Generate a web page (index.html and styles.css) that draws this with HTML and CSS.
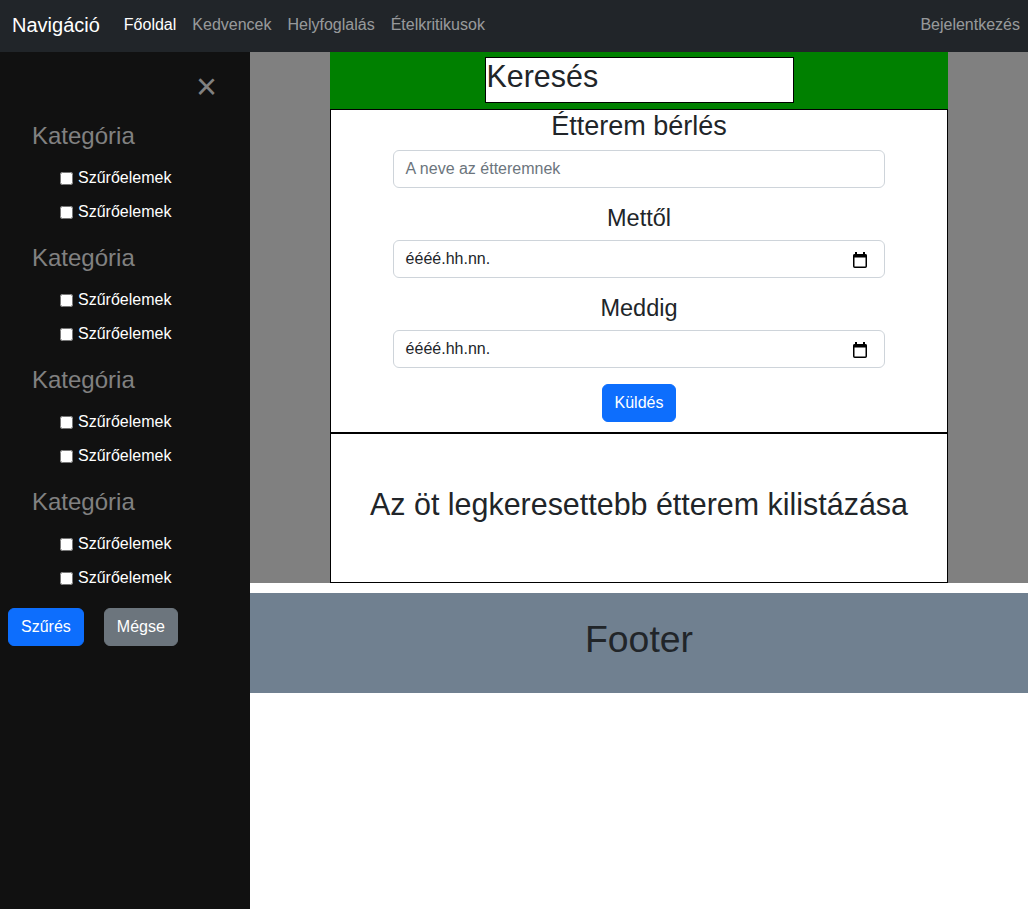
FILE: index.html
```html
<!DOCTYPE html>
<html lang="hu">
<head>
<meta charset="utf-8">
<title>Navigáció</title>
<link rel="stylesheet" href="styles.css">
</head>
<body>
<nav class="navbar">
  <a class="brand" href="#">Navigáció</a>
  <ul class="nav-links">
    <li><a class="nav-link active" href="#">Főoldal</a></li>
    <li><a class="nav-link" href="#">Kedvencek</a></li>
    <li><a class="nav-link" href="#">Helyfoglalás</a></li>
    <li><a class="nav-link" href="#">Ételkritikusok</a></li>
  </ul>
  <a class="nav-link login" href="#">Bejelentkezés</a>
</nav>
<div class="layout">
  <aside class="sidenav">
    <a class="closebtn" href="#">&times;</a>
    <div class="category">
      <h4 class="cat-title">Kategória</h4>
      <label class="check-row"><input type="checkbox"> Szűrőelemek</label>
      <label class="check-row"><input type="checkbox"> Szűrőelemek</label>
    </div>
    <div class="category">
      <h4 class="cat-title">Kategória</h4>
      <label class="check-row"><input type="checkbox"> Szűrőelemek</label>
      <label class="check-row"><input type="checkbox"> Szűrőelemek</label>
    </div>
    <div class="category">
      <h4 class="cat-title">Kategória</h4>
      <label class="check-row"><input type="checkbox"> Szűrőelemek</label>
      <label class="check-row"><input type="checkbox"> Szűrőelemek</label>
    </div>
    <div class="category">
      <h4 class="cat-title">Kategória</h4>
      <label class="check-row"><input type="checkbox"> Szűrőelemek</label>
      <label class="check-row"><input type="checkbox"> Szűrőelemek</label>
    </div>
    <div class="side-buttons">
      <button class="btn btn-primary">Szűrés</button>
      <button class="btn btn-secondary">Mégse</button>
    </div>
  </aside>
  <main class="main">
    <div class="stage">
      <div class="column">
        <div class="search-bar">
          <div class="search-box">Keresés</div>
        </div>
        <form class="rent-form">
          <h3 class="form-title">Étterem bérlés</h3>
          <div class="form-control placeholder">A neve az étteremnek</div>
          <h4 class="field-label">Mettől</h4>
          <div class="form-control date-field">
            <span>éééé.hh.nn.</span>
            <svg class="cal-icon" width="14" height="16" viewBox="0 0 14 16" aria-hidden="true">
              <rect x="2" y="0" width="2" height="3" fill="#000"/>
              <rect x="10" y="0" width="2" height="3" fill="#000"/>
              <rect x="0.75" y="2.75" width="12.5" height="12.5" rx="1" fill="none" stroke="#000" stroke-width="1.5"/>
              <rect x="0.5" y="2.5" width="13" height="3" fill="#000"/>
            </svg>
          </div>
          <h4 class="field-label">Meddig</h4>
          <div class="form-control date-field">
            <span>éééé.hh.nn.</span>
            <svg class="cal-icon" width="14" height="16" viewBox="0 0 14 16" aria-hidden="true">
              <rect x="2" y="0" width="2" height="3" fill="#000"/>
              <rect x="10" y="0" width="2" height="3" fill="#000"/>
              <rect x="0.75" y="2.75" width="12.5" height="12.5" rx="1" fill="none" stroke="#000" stroke-width="1.5"/>
              <rect x="0.5" y="2.5" width="13" height="3" fill="#000"/>
            </svg>
          </div>
          <button type="button" class="btn btn-primary send">Küldés</button>
        </form>
        <section class="top-list">
          <h2 class="top-title">Az öt legkeresettebb étterem kilistázása</h2>
        </section>
      </div>
    </div>
    <footer class="footer">
      <h1 class="footer-title">Footer</h1>
    </footer>
  </main>
</div>
</body>
</html>
```

FILE: styles.css
```css
* { box-sizing: border-box; }

html, body {
  margin: 0;
  padding: 0;
}

body {
  font-family: "Liberation Sans", Arial, sans-serif;
  font-size: 16px;
  line-height: 1.5;
  color: #212529;
  background: #fff;
}

a { text-decoration: none; }

/* Navbar */
.navbar {
  display: flex;
  align-items: center;
  height: 52px;
  padding: 0 8px 0 12px;
  background: #212529;
}

.brand {
  font-size: 20px;
  line-height: 30px;
  color: #fff;
  margin-right: 16px;
  padding-bottom: 2px;
}

.nav-links {
  display: flex;
  list-style: none;
  margin: 0;
  padding: 0;
  flex: 1;
}

.nav-link {
  display: block;
  padding: 8px;
  font-size: 16px;
  line-height: 24px;
  color: rgba(255, 255, 255, 0.55);
  padding-bottom: 10px;
}

.nav-link.active { color: #fff; }

.login { padding-right: 0; }

/* Layout */
.layout {
  display: grid;
  grid-template-columns: 250px 1fr;
  min-height: calc(100vh - 52px);
}

.sidenav {
  position: relative;
  background: #111;
  padding-top: 66px;
}

.closebtn {
  position: absolute;
  top: 0;
  right: 25px;
  padding: 8px 8px 8px 32px;
  font-size: 36px;
  line-height: 54px;
  color: #818181;
}

.category {
  margin-bottom: 11px;
}

.cat-title {
  margin: 0 0 7px;
  padding-left: 32px;
  font-size: 24px;
  line-height: 36px;
  font-weight: 400;
  color: #818181;
}

.check-row {
  display: flex;
  align-items: center;
  height: 34px;
  padding-left: 56px;
  color: #fff;
  font-size: 16px;
}

.check-row input {
  width: 13px;
  height: 13px;
  margin: 0 5px 0 4px;
}

.side-buttons {
  display: flex;
  gap: 20px;
  padding-left: 8px;
  margin-top: 13px;
}

/* Buttons */
.btn {
  display: inline-block;
  font-family: inherit;
  font-size: 16px;
  line-height: 24px;
  padding: 6px 12px;
  border: 1px solid transparent;
  border-radius: 6px;
  color: #fff;
  cursor: pointer;
}

.btn-primary {
  background: #0d6efd;
  border-color: #0d6efd;
}

.btn-secondary {
  background: #6c757d;
  border-color: #6c757d;
}

/* Main */
.main {
  display: flex;
  flex-direction: column;
}

.stage {
  background: #808080;
}

.column {
  width: 618px;
  margin: 0 auto;
}

.search-bar {
  background: #008000;
  padding: 5px 0 6px;
  display: flex;
  justify-content: center;
}

.search-box {
  width: 50%;
  height: 46px;
  background: #fff;
  border: 1px solid #000;
  font-size: 30.45px;
  line-height: 36px;
  padding-left: 1px;
  color: #212529;
}

.rent-form {
  background: #fff;
  border: 1px solid #000;
  display: flex;
  flex-direction: column;
  align-items: center;
  padding-bottom: 10px;
}

.form-title {
  margin: 0 0 8px;
  font-size: 27px;
  line-height: 32.4px;
  font-weight: 400;
}

.field-label {
  margin: 0 0 8px;
  font-size: 23.5px;
  line-height: 28px;
  font-weight: 400;
}

.form-control {
  width: 80%;
  height: 38px;
  border: 1px solid #ced4da;
  border-radius: 6px;
  padding: 6px 12px;
  font-size: 16px;
  line-height: 24px;
  color: #212529;
  background: #fff;
  margin-bottom: 16px;
}

.placeholder { color: #6c757d; }

.date-field {
  display: flex;
  align-items: center;
  justify-content: space-between;
  padding-right: 17px;
}

.cal-icon {
  display: block;
  margin-top: 1px;
}

.send {
  margin-top: 0;
}

.top-list {
  background: #fff;
  border: 1px solid #000;
  padding: 52px 0 51px;
  text-align: center;
}

.top-title {
  margin: 0 0 8px;
  font-size: 30.45px;
  line-height: 36.5px;
  font-weight: 400;
}

/* Footer */
.footer {
  margin-top: 10px;
  background: #708090;
  text-align: center;
  padding: 24px 0 23px;
}

.footer-title {
  margin: 0 0 8px;
  font-size: 37.4px;
  line-height: 44.9px;
  font-weight: 400;
  color: #212529;
}
```
